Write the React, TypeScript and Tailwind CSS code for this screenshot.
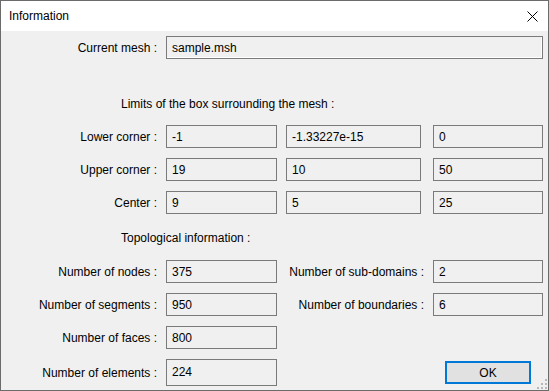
import React from 'react';

const font = { fontFamily: '"Liberation Sans", Arial, sans-serif' };

function Field({ value, w, h = 'h-[23px]', top = false }: { value: string; w: string; h?: string; top?: boolean }) {
  return (
    <div className={`${w} ${h} shrink-0 border border-[#7a7a7a] bg-[#f0f0f0] pl-[5px] flex ${top ? 'items-start pt-[3px]' : 'items-center'} text-[12px] text-black`}>
      {value}
    </div>
  );
}

function Label({ text, w = 'w-[165px]' }: { text: string; w?: string }) {
  return <div className={`${w} shrink-0 pr-[9px] text-right text-[12px] text-black`}>{text}</div>;
}

export default function App() {
  const limits = [
    { label: 'Lower corner :', v: ['-1', '-1.33227e-15', '0'] },
    { label: 'Upper corner :', v: ['19', '10', '50'] },
    { label: 'Center :', v: ['9', '5', '25'] },
  ];

  return (
    <div className="w-[549px] h-[391px] border border-[#6b6b6b] bg-[#f0f0f0] flex flex-col overflow-hidden relative" style={font}>
      {/* Title bar */}
      <div className="h-[30px] shrink-0 bg-white flex items-center justify-between pl-[8px] pr-[10px] text-[12px] text-black">
        <span>Information</span>
        <svg width="11" height="11" viewBox="0 0 11 11" className="mr-[0px] mt-[1px]">
          <path d="M0.5 0.5 L10.5 10.5 M10.5 0.5 L0.5 10.5" stroke="#000" strokeWidth="1" />
        </svg>
      </div>

      {/* Current mesh */}
      <div className="mt-[5px] flex items-center">
        <Label text="Current mesh :" />
        <div className="w-[377px] h-[23px] border border-[#7a7a7a] bg-[#f0f0f0] pl-[5px] flex items-center text-[12px] text-black shadow-[inset_-1px_-1px_0_#ffffff]">
          sample.msh
        </div>
      </div>

      {/* Limits */}
      <div className="mt-[37px] h-[16px] leading-[16px] pl-[120px] text-[12px] text-black">Limits of the box surrounding the mesh :</div>
      <div className="mt-[13px] flex flex-col gap-[10px]">
        {limits.map((r) => (
          <div key={r.label} className="flex items-center">
            <Label text={r.label} />
            <Field value={r.v[0]} w="w-[111px]" />
            <div className="w-[9px]" />
            <Field value={r.v[1]} w="w-[135px]" />
            <div className="w-[12px]" />
            <Field value={r.v[2]} w="w-[110px]" />
          </div>
        ))}
      </div>

      {/* Topology */}
      <div className="mt-[16px] h-[16px] leading-[16px] pl-[120px] text-[12px] text-black">Topological information :</div>
      <div className="mt-[14px] flex flex-col gap-[10px]">
        <div className="flex items-center">
          <Label text="Number of nodes :" />
          <Field value="375" w="w-[111px]" />
          <Label text="Number of sub-domains :" w="w-[156px]" />
          <Field value="2" w="w-[110px]" />
        </div>
        <div className="flex items-center">
          <Label text="Number of segments :" />
          <Field value="950" w="w-[111px]" />
          <Label text="Number of boundaries :" w="w-[156px]" />
          <Field value="6" w="w-[110px]" />
        </div>
        <div className="flex items-center">
          <Label text="Number of faces :" />
          <Field value="800" w="w-[111px]" />
        </div>
        <div className="flex items-center">
          <Label text="Number of elements :" />
          <Field value="224" w="w-[111px]" h="h-[27px]" top />
          <div className="w-[168px]" />
          <button className="w-[86px] h-[23px] border-2 border-[#0078d7] bg-[#e1e1e1] text-[12px] text-black flex items-center justify-center">
            OK
          </button>
        </div>
      </div>

      {/* Size grip */}
      <svg width="10" height="10" viewBox="0 0 10 10" className="absolute right-[1px] bottom-[1px]">
        <rect x="8" y="0" width="2" height="2" fill="#b8b8b8" />
        <rect x="4" y="4" width="2" height="2" fill="#b8b8b8" />
        <rect x="8" y="4" width="2" height="2" fill="#b8b8b8" />
        <rect x="0" y="8" width="2" height="2" fill="#b8b8b8" />
        <rect x="4" y="8" width="2" height="2" fill="#b8b8b8" />
        <rect x="8" y="8" width="2" height="2" fill="#b8b8b8" />
      </svg>
    </div>
  );
}
